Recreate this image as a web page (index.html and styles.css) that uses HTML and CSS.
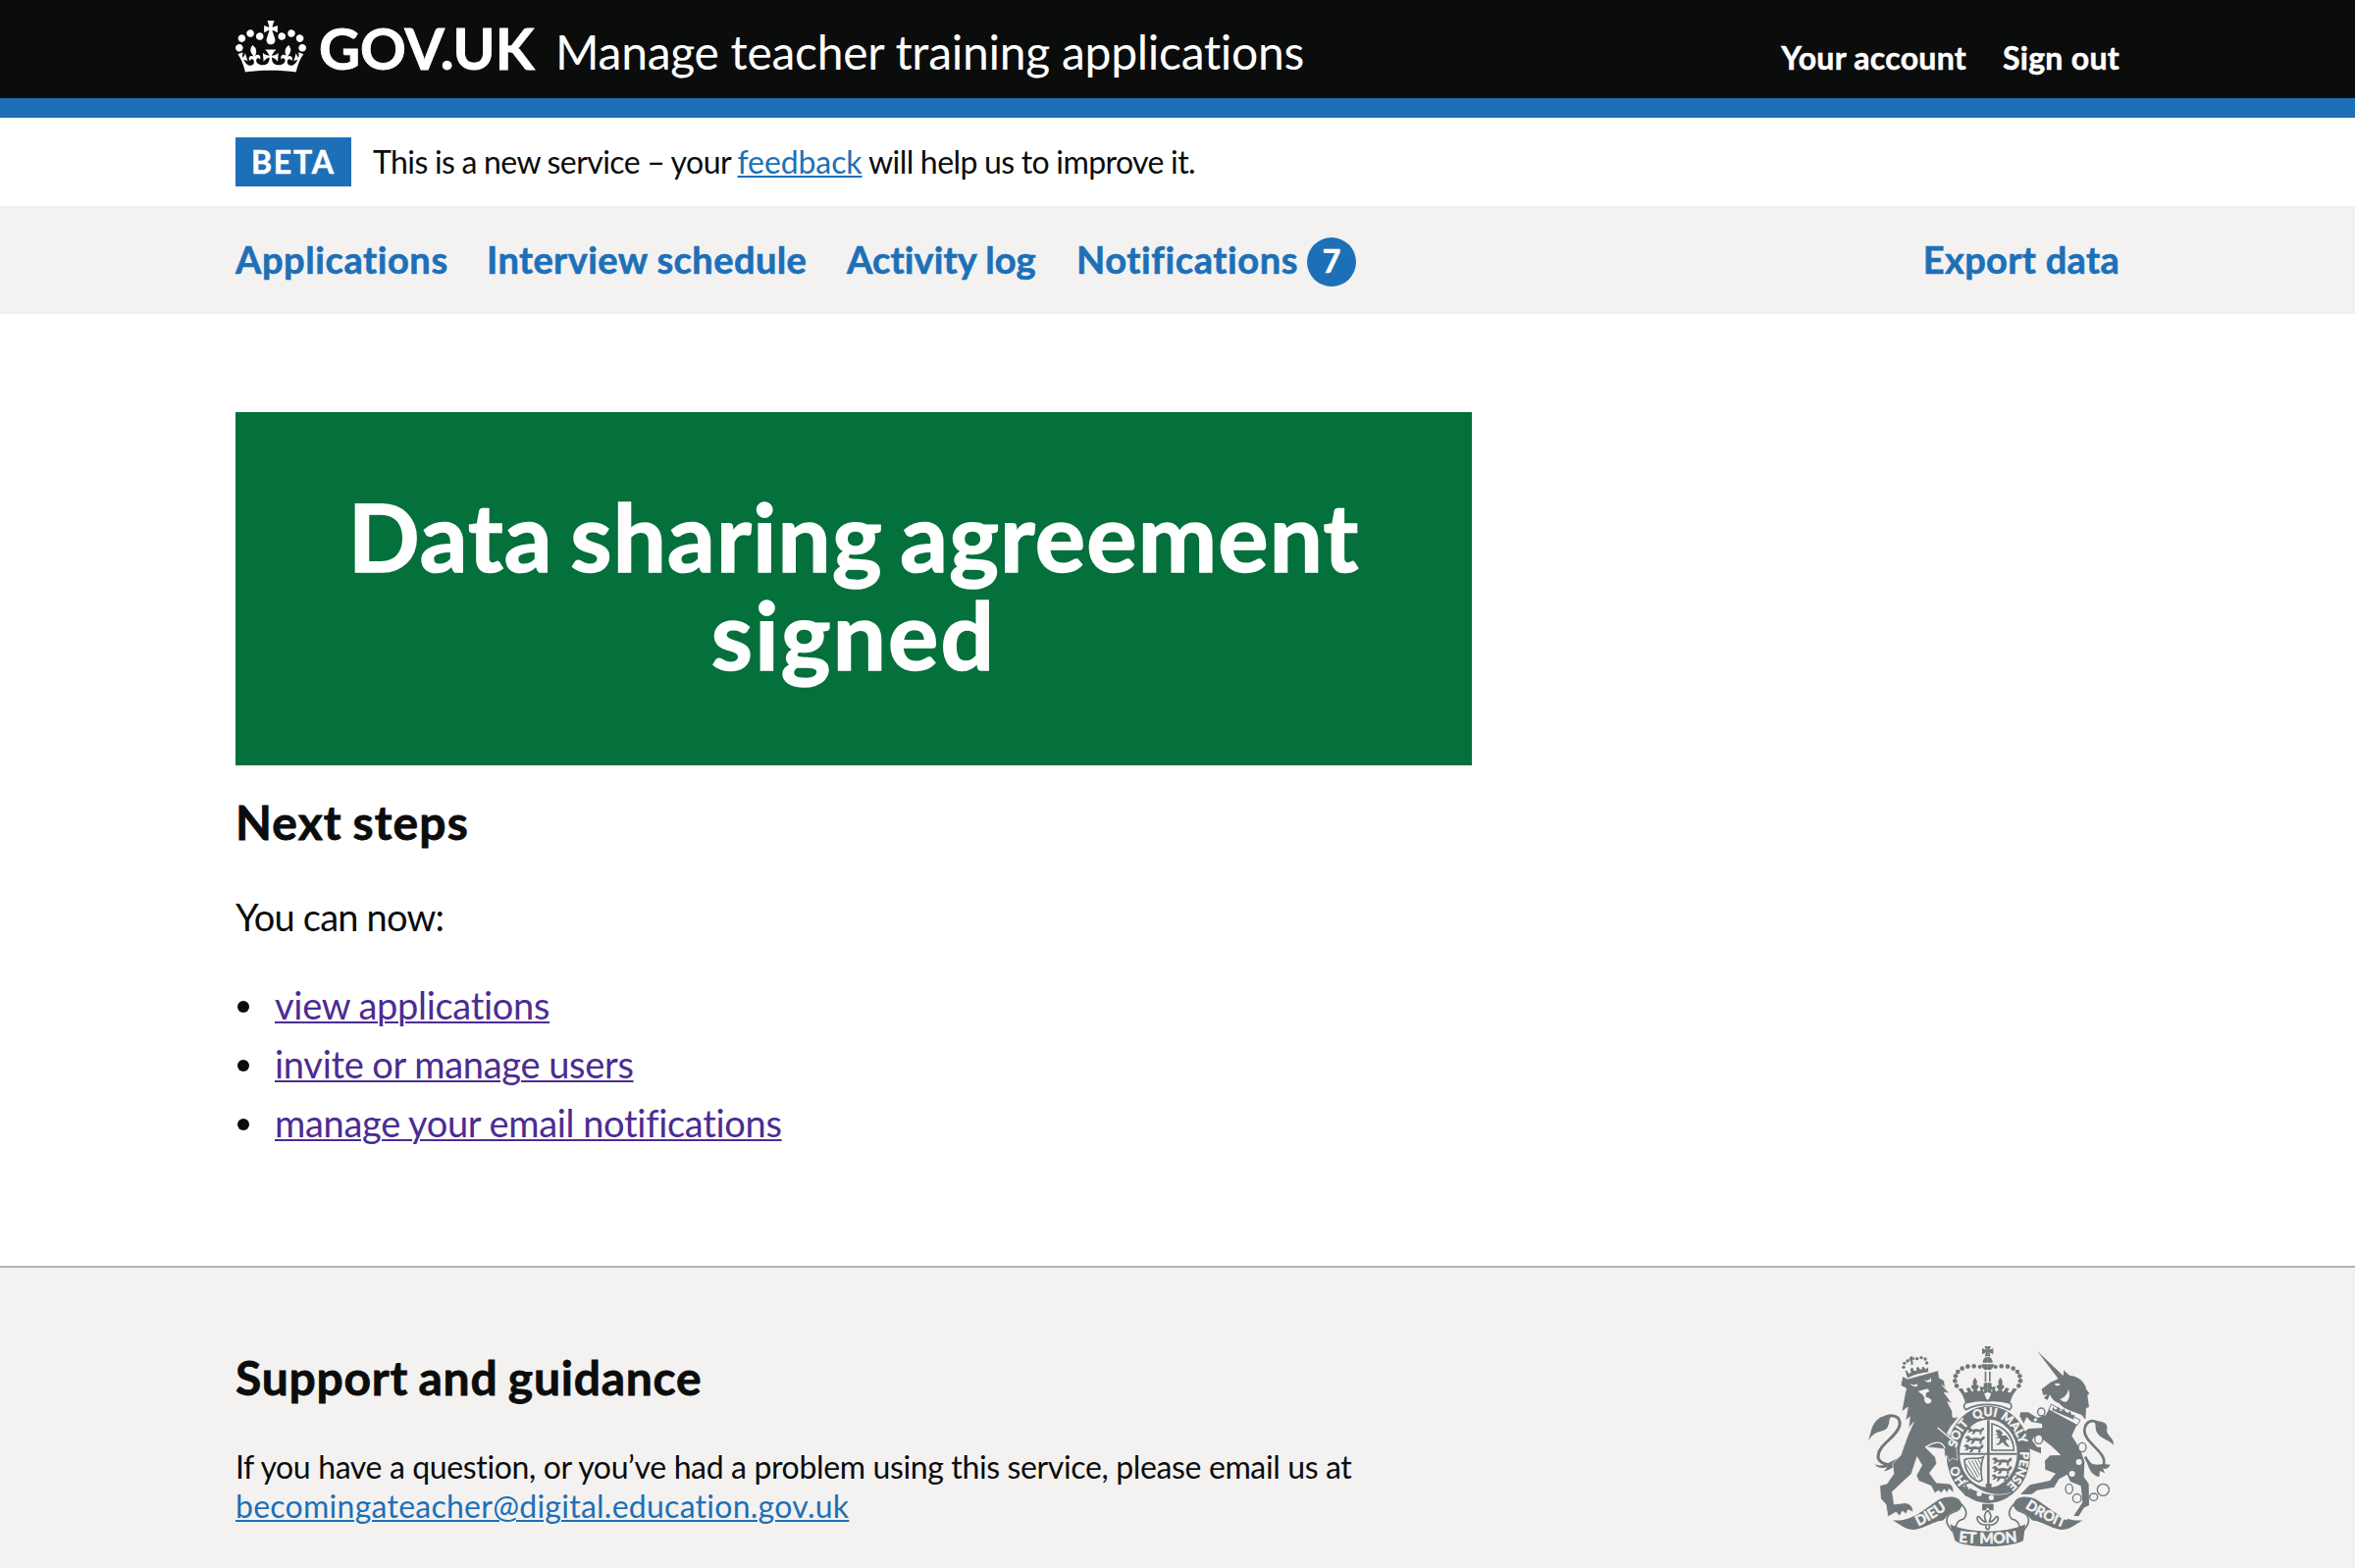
FILE: index.html
```
<!DOCTYPE html>
<html lang="en">
<head>
<meta charset="utf-8">
<title>Data sharing agreement signed - Manage teacher training applications - GOV.UK</title>
<link rel="stylesheet" href="styles.css">
</head>
<body>
<header class="header">
  <div class="container header-row">
    <svg class="crown" viewBox="0 0 132 97" aria-hidden="true"><path fill="currentColor" fill-rule="evenodd" d="M25 30.2c3.5 1.5 7.7-.2 9.1-3.7 1.5-3.6-.2-7.8-3.9-9.2-3.6-1.4-7.6.3-9.1 3.9-1.4 3.5.3 7.5 3.9 9zM9 39.5c3.6 1.5 7.8-.2 9.2-3.7 1.5-3.6-.2-7.8-3.9-9.1-3.6-1.5-7.6.2-9.1 3.8-1.4 3.5.3 7.5 3.8 9zM4.4 57.2c3.5 1.5 7.7-.2 9.1-3.8 1.5-3.6-.2-7.7-3.9-9.1-3.5-1.5-7.6.3-9.1 3.8-1.4 3.5.3 7.6 3.9 9.1zm38.3-21.4c3.5 1.5 7.7-.2 9.1-3.8 1.5-3.6-.2-7.7-3.9-9.1-3.6-1.5-7.6.3-9.1 3.8-1.3 3.6.4 7.7 3.9 9.1zm64.4-5.6c-3.6 1.5-7.8-.2-9.1-3.7-1.5-3.6.2-7.8 3.8-9.2 3.6-1.4 7.7.3 9.2 3.9 1.3 3.5-.4 7.5-3.9 9zm15.9 9.3c-3.6 1.5-7.7-.2-9.1-3.7-1.5-3.6.2-7.8 3.7-9.1 3.6-1.5 7.7.2 9.2 3.8 1.5 3.5-.3 7.5-3.8 9zm4.7 17.7c-3.6 1.5-7.8-.2-9.2-3.8-1.5-3.6.2-7.7 3.9-9.1 3.6-1.5 7.7.3 9.2 3.8 1.3 3.5-.4 7.6-3.9 9.1zM89.3 35.8c-3.6 1.5-7.8-.2-9.2-3.8-1.4-3.6.2-7.7 3.9-9.1 3.6-1.5 7.7.3 9.2 3.8 1.4 3.6-.3 7.7-3.9 9.1zM69.7 17.7l8.9 4.7V9.3l-8.9 2.8c-.2-.3-.5-.6-.9-.9L72.4 0H59.6l3.5 11.2c-.3.3-.6.5-.9.9l-8.8-2.8v13.1l8.8-4.7c.3.3.6.7.9.9l-5 15.4v.1c-.2.8-.4 1.6-.4 2.4 0 4.1 3.1 7.5 7 8.1h.2c.3 0 .7.1 1 .1.4 0 .7 0 1-.1h.2c4-.6 7.1-4.1 7.1-8.1 0-.8-.1-1.7-.4-2.4V34l-5.1-15.4c.4-.2.7-.6 1-.9zM66 92.8c16.9 0 32.8 1.1 47.1 3.2 4-16.9 8.9-26.7 14-33.5l-9.6-3.4c1 4.9 1.1 7.2 0 10.2-1.5-1.4-3-4.3-4.2-8.7L108.6 76c2.8-2 5-3.2 7.5-3.3-4.4 9.4-10 11.9-13.6 11.2-4.3-.8-6.3-4.6-5.6-7.9 1-4.7 5.7-5.9 8-.5 4.3-8.7-3-11.4-7.6-8.8 7.1-7.2 7.9-13.5 2.1-21.1-8 6.1-8.1 12.3-4.5 20.8-4.7-5.4-12.1-2.5-9.5 6.2 3.4-5.2 7.9-2 7.2 3.1-.6 4.3-6.4 7.8-13.5 7.2-10.3-.9-10.9-8-11.2-13.8 2.5-.5 7.1 1.8 11 7.3L80.2 60c-4.1 4.4-8 5.3-12.3 5.4 1.4-4.4 8-11.6 8-11.6H55.5s6.4 7.2 7.9 11.6c-4.2-.1-8-1-12.3-5.4l1.4 16.4c3.9-5.5 8.5-7.7 10.9-7.3-.3 5.8-.9 12.8-11.1 13.8-7.2.6-12.9-2.9-13.5-7.2-.7-5 3.8-8.3 7.1-3.1 2.7-8.7-4.6-11.6-9.4-6.2 3.7-8.5 3.6-14.7-4.6-20.8-5.8 7.6-5 13.9 2.2 21.1-4.7-2.6-11.9.1-7.7 8.8 2.3-5.5 7.1-4.2 8.1.5.7 3.3-1.3 7.1-5.7 7.9-3.5.7-9-1.8-13.5-11.2 2.5.1 4.7 1.3 7.5 3.3l-4.7-15.4c-1.2 4.4-2.7 7.2-4.3 8.7-1.1-3-.9-5.3 0-10.2l-9.5 3.4c5 6.9 9.9 16.7 14 33.5 14.8-2.1 30.8-3.2 47.7-3.2z"/></svg>
    <a class="logotype" href="#">GOV.UK</a>
    <a class="service-name" href="#">Manage teacher training applications</a>
    <nav class="account">
      <a class="account-link" href="#">Your account</a>
      <a class="account-link sign-out" href="#">Sign out</a>
    </nav>
  </div>
</header>
<div class="container phase">
  <strong class="tag">BETA</strong>
  <span class="phase-text">This is a new service – your <a class="link feedback" href="#">feedback</a> will help us to improve it.</span>
</div>
<nav class="primary">
  <div class="container primary-row">
    <a class="nav-link nav-applications" href="#">Applications</a>
    <a class="nav-link" href="#">Interview schedule</a>
    <a class="nav-link nav-activity" href="#">Activity log</a>
    <a class="nav-link nav-notifications" href="#">Notifications<span class="badge">7</span></a>
    <a class="nav-link nav-export" href="#">Export data</a>
  </div>
</nav>
<main class="container main">
  <div class="panel"><h1 class="panel-title">Data sharing agreement <span class="panel-last">signed</span></h1></div>
  <h2 class="heading next">Next steps</h2>
  <p class="body">You can now:</p>
  <ul class="list">
    <li class="item"><a class="link visited" href="#">view applications</a></li>
    <li class="item"><a class="link visited" href="#">invite or manage users</a></li>
    <li class="item"><a class="link visited" href="#">manage your email notifications</a></li>
  </ul>
</main>
<footer class="footer">
  <div class="container footer-row">
    <div class="support">
      <h2 class="heading support-title">Support and guidance</h2>
      <p class="support-text">If you have a question, or you’ve had a problem using this service, please email us at<br><a class="link email" href="#">becomingateacher@digital.education.gov.uk</a></p>
    </div>
    <svg class="arms" viewBox="72 66 750 612" role="img" aria-label="Royal coat of arms">
      <defs>
        <path id="garter" d="M439 510A98 115 0 0 1 439 280A98 115 0 0 1 439 510"/>
        <path id="dieu" d="M213 621Q268 598 322 556"/>
        <path id="mon" d="M345 664Q437 674 530 664"/>
        <path id="droit" d="M548 557Q604 596 672 622"/>
        <g id="leopard"><path d="M2 6l8-5 7 4 2 5 15-2 16 2 6-7 7 2-3 8-6 3-2 8 6 2-12 1 1-9-14-1-6 9-9 1 6-10-7-1-5 5-9-1 6-4-1-5-6-2z"/></g>
        <g id="half">
          <circle cx="413" cy="129" r="6"/><circle cx="395" cy="127" r="7"/><circle cx="376" cy="128" r="7"/><circle cx="359" cy="134" r="7"/><circle cx="346" cy="144" r="7"/><circle cx="339" cy="157" r="7"/><circle cx="337" cy="172" r="7"/><circle cx="342" cy="187" r="7"/>
          <path d="M437 236V206l-14 6 4-14-12 5-2-15 11 3 2-9h-3l5-4h9v38zM437 236c-26-5-48-4-68 4-6-21-12-33-23-43l13-3 8 14 10-2-6-10 10-4 9 14 4-6-7-8c-2-6 4-10 7-8-6-8 0-16 4-22 5 6 10 14 4 22 4-2 9 2 7 8l-6 8 7 4 11-6z"/>
          <path d="M437 66h-10l5 11-12-5v19l12-6-4 12h9zM437 99h-5c-9 5-10 11-10 17h15zM418 121h19v17h-9c-7-4-10-10-10-17zM428 143h5v32h-5z"/>
        </g>
      </defs>
      <g class="ink">
        <!-- crown above the shield -->
        <use href="#half"/><use href="#half" transform="matrix(-1 0 0 1 874 0)"/>
        <path class="outline" stroke-width="5" d="M371 239C408 229 466 229 503 239C513 243 511 255 504 260C466 239 408 239 370 260C362 253 363 243 371 239z"/>
        <!-- garter and shield -->
        <path class="outline" stroke-width="4" d="M345 283C326 297 316 312 308 334"/>
        <ellipse cx="439" cy="397" rx="128" ry="148"/>
        <ellipse class="paper" cx="439" cy="394" rx="88" ry="104"/>
        <path d="M435 292h8v206h-8zM351 392h176v6H351z"/>
        <use href="#leopard" transform="translate(372 312) scale(.87)"/><use href="#leopard" transform="translate(366 338)"/><use href="#leopard" transform="translate(362 364)"/>
        <use href="#leopard" transform="translate(449 404)"/><use href="#leopard" transform="translate(449 430)"/><use href="#leopard" transform="translate(448 456) scale(.85)"/>
        <path class="outline" stroke-width="5" d="M450 303V384H517C516 346 493 314 450 303z"/>
        <path d="M462 322l12 0 9 9-4 8 14 0 12 15-9-4-4 7 13 18-14-5-8-11-14 10-8-4 10-3 4-15-13 0 8-6-11-7 11 1-8-8z"/>
        <path class="outline" stroke-width="5" d="M366 413C384 404 404 414 424 404C414 430 416 455 420 475L410 480C384 471 367 446 366 413z"/>
        <path class="outline" stroke-width="3" d="M378 416L408 468M389 415L412 460M399 414L414 445M408 412L416 428M370 425L400 470"/>
        <!-- buckle -->
        <path class="paper" d="M362 494L374 475L392 490C430 520 474 524 508 512L498 524C456 530 410 522 380 504z"/>
        <path d="M383 500C420 519 468 528 510 514C480 546 425 562 369 518z"/>
        <path class="outline" stroke-width="6" d="M388 484C372 478 363 492 374 500C361 508 366 526 382 522"/>
        <path d="M431 486h18v18h-18z"/>
        <circle class="paper" cx="411" cy="517" r="8"/><circle class="paper" cx="448" cy="529" r="8"/>
        <!-- lion -->
        <path class="outline" stroke-width="9" d="M178 423C135 437 107 424 102 407C99 366 160 346 168 307C172 275 137 271 113 290"/>
        <path d="M72 356C82 322 83 298 111 282L143 278C131 290 142 316 117 324C96 329 83 335 72 356zM92 425C103 434 122 432 143 418L184 398L180 428C153 425 145 444 120 449L130 436C112 440 98 438 92 425z"/>
        <path class="edge" d="M171 186L177 158L192 166L286 140L289 163L304 171L307 193L297 184L320 210L303 207L327 239L314 236L328 263L330 283L346 286L324 312L313 332L340 362L345 414L328 408L320 418L312 400L306 404L304 380L246 374L277 405L281 425L259 454L280 483L314 486C325 485 333 496 333 514L319 502L313 514L304 503L295 515L287 507L275 515L264 493L226 478L219 461L236 430L221 404L204 456L145 511L151 549L184 545C199 546 209 557 209 572L193 566L188 579L176 570L168 585L157 573L132 587L126 550L110 532L107 492L129 486L150 456L146 425L171 400L193 338L211 298L195 317L199 282L186 293L193 252L174 266L183 218L188 195z"/>
        <path class="paper" d="M199 180q17 8 24-1l-2 10q-13 4-22-9zM243 169q14 6 21-7l0 12q-14 6-21-5zM224 204l28-8 8 7-12 6 0 12q18 3 17 14-6 10-16 5-8-7-5-16l-6-10z"/>
        <path class="cut" d="M284 315L340 362M248 374C270 360 296 350 306 378"/>
        <path d="M192 163L184 139L191 142L196 150L203 146L200 136L207 131L212 141L219 142L219 132L225 128L229 136L236 137L237 128L244 131L247 137L254 130L256 145Q222 148 192 163zM199 99l9-4-1 7 7-3-1 10-6-3 2 16-6 2-2-15-6 3z"/>
        <circle cx="180" cy="130" r="5"/><circle cx="182" cy="118" r="5"/><circle cx="192" cy="111" r="5"/><circle cx="221" cy="104" r="5"/><circle cx="234" cy="101" r="5"/><circle cx="246" cy="105" r="5"/><circle cx="251" cy="117" r="5"/>
        <!-- unicorn -->
        <path d="M588 80L670 158L653 166z"/>
        <path d="M652 166L669 154L669 139L687 155C715 157 736 177 739 199L748 210L742 216L747 252L738 255L736 290L724 276C700 265 672 262 655 240C638 235 631 222 627 214L620 230L609 225L619 212L607 216L602 197L628 177z"/>
        <path class="paper" d="M641 182q9-6 18 1-9 8-18-1zM658 228q22-8 26-31 8 22-5 38-8 5-21-7z"/>
        <path d="M628 251L711 303L694 340L720 381L733 420L731 466L746 487L747 552L731 560L715 586L700 584L727 544L722 493L690 480L680 458L655 472L640 497L588 506L572 518L537 519L566 490L627 477L645 455L613 443L612 416L628 400L661 399L632 371L603 349L578 344L573 354L588 374L600 375L600 394L564 379L545 331L562 318L604 316L603 303L570 297L556 282L547 302L535 280L537 268L561 268L589 285L615 276z"/>
        <path class="paper" d="M631 240L722 291L711 306L624 260z"/>
        <path class="outline" stroke-width="3" d="M631 243L720 292L710 308L624 261z"/>
        <path d="M634 262l3-11 6 9 5-1 4-9 6 14 7 0 5-8 6 14 7 0 5-7 6 14 8-2-2 15z"/>
        <g class="outline" stroke-width="4"><ellipse class="ring" cx="601" cy="267" rx="11" ry="12"/><ellipse class="ring" cx="593" cy="350" rx="12" ry="14"/><ellipse class="ring" cx="726" cy="375" rx="12" ry="14"/><ellipse class="ring" cx="686" cy="502" rx="11" ry="15"/><ellipse class="ring" cx="710" cy="531" rx="13" ry="13"/><ellipse class="ring" cx="761" cy="527" rx="12" ry="11"/><circle class="ring" cx="790" cy="505" r="18"/></g>
        <circle class="paper" cx="716" cy="420" r="9"/><circle class="paper" cx="695" cy="456" r="9"/><circle class="paper" cx="583" cy="291" r="5"/>
        <path class="outline" stroke-width="8" d="M735 404C750 437 780 445 791 430C806 390 729 362 733 321C737 293 759 288 777 303"/>
        <path d="M761 294C796 294 807 305 801 324C805 345 822 343 822 368C807 350 783 350 773 332C763 320 771 306 761 294zM738 412C750 430 769 430 790 426L812 428C805 440 798 443 789 439L795 454L780 447L778 466C754 459 746 443 738 412z"/>
        <!-- motto ribbon -->
        <path d="M146 598C211 604 247 558 291 533C322 521 354 526 357 549C358 565 338 566 320 577C308 586 307 602 289 600C260 608 237 626 207 627C185 626 171 612 146 598z"/>
        <path d="M728 598C663 604 627 558 583 533C552 521 520 526 517 549C516 565 536 566 554 577C566 586 567 602 585 600C614 608 637 626 667 627C689 626 703 612 728 598z"/>
        <path class="fold" d="M357 549C376 569 373 584 364 594C350 597 342 605 340 616L327 629C316 615 305 601 317 582C334 568 350 575 357 549zM517 549C498 569 501 584 510 594C524 597 532 605 534 616L547 629C558 615 569 601 557 582C540 568 524 575 517 549z"/>
        <path d="M322 610C380 640 500 638 552 610L546 660C510 684 365 684 337 660z"/>
        <path d="M420 548h35v20h-12l-6-9-6 9h-11z"/>
        <path class="outline" stroke-width="5" d="M437 568C420 582 430 593 432 603C417 605 411 577 405 590C404 604 416 613 430 612M437 568C454 582 444 593 442 603C457 605 463 577 469 590C470 604 458 613 444 612M425 612H449M432 615C430 623 435 626 437 626C439 626 444 623 442 615"/>
      </g>
      <g class="motto">
        <text class="garter-text"><textPath href="#garter" startOffset="15.5%">HO</textPath></text>
        <text class="garter-text"><textPath href="#garter" startOffset="34%">SOIT</textPath></text>
        <text class="garter-text"><textPath href="#garter" startOffset="48.5%">QUI</textPath></text>
        <text class="garter-text"><textPath href="#garter" startOffset="63%">MALY</textPath></text>
        <text class="garter-text"><textPath href="#garter" startOffset="82.5%">PENSE</textPath></text>
        <text class="ribbon-text"><textPath href="#dieu" startOffset="50%">DIEU</textPath></text>
        <text class="ribbon-text mon-text"><textPath href="#mon" startOffset="50%">ET MON</textPath></text>
        <text class="ribbon-text"><textPath href="#droit" startOffset="50%">DROIT</textPath></text>
      </g>
    </svg>
  </div>
</footer>
</body>
</html>
```
FILE: styles.css
```
*{box-sizing:border-box}
body{margin:0;min-height:1598px;display:flex;flex-direction:column;background:#fff;color:#0b0c0c;font-family:Lato,"Liberation Sans",sans-serif;font-size:32px;line-height:40px;overflow:hidden;font-kerning:normal}
a{text-decoration:none;color:inherit}
h1,h2,p,ul{margin:0;padding:0}
.container{width:1920px;margin:0 auto}
.header{height:120px;background:#0b0c0c;border-bottom:20px solid #1d70b8;color:#fff}
.header-row{display:flex;align-items:baseline;padding-top:19px}
.crown{width:72px;height:53px;align-self:flex-start;margin-top:2px}
.logotype,.account,.tag,.nav-link,.panel-title,.heading{-webkit-text-stroke:.016em currentColor}
.logotype{margin-left:13px;width:220px;font-size:58px;line-height:60px;font-weight:700}
.service-name{margin-left:21px;font-size:48px;line-height:50px;letter-spacing:-.28px}
.account{margin-left:auto;display:flex;font-weight:700}
.account-link{letter-spacing:.28px}
.sign-out{margin-left:37px;letter-spacing:.3px}
.phase{height:90px;padding-top:20px;display:flex;align-items:flex-start}
.tag{width:118px;height:50px;padding:5px 0 5px 16px;background:#1d70b8;color:#fff;font-weight:700;letter-spacing:1.8px}
.phase-text{margin:5px 0 0 22px;letter-spacing:-.58px;word-spacing:-.4px}
.link{color:#1d70b8;text-decoration:underline;text-decoration-thickness:2px;text-underline-offset:2px}
.feedback{letter-spacing:-.1px}
.visited{color:#4c2c92}
.primary{height:110px;padding-top:29px;background:#f3f2f1}
.primary-row{display:grid;grid-template-columns:256px 367px 234px 285px 1fr;align-items:start}
.nav-link{color:#1d70b8;font-size:38px;line-height:50px;font-weight:700;letter-spacing:.42px}
.nav-applications{letter-spacing:.58px}
.nav-activity{letter-spacing:.12px}
.nav-notifications{display:flex;justify-content:space-between;letter-spacing:.6px}
.nav-export{justify-self:end;letter-spacing:.32px}
.badge{width:50px;height:50px;margin-top:3px;border-radius:50%;background:#1d70b8;color:#fff;font-size:32px;line-height:48px;text-align:center;letter-spacing:0}
.main{padding-top:100px}
.panel{width:1260px;height:360px;padding:76px 70px 0;background:#04703c;color:#fff;text-align:center}
.panel-title{font-size:96px;line-height:100px;font-weight:700;letter-spacing:1.2px;word-spacing:-7px}
.panel-last{display:block;letter-spacing:2.2px}
.heading{font-size:48px;line-height:50px;font-weight:700}
.next{margin-top:33px;letter-spacing:1.1px;word-spacing:-2px}
.body{margin-top:46px;font-size:38px;line-height:50px;letter-spacing:-.8px}
.list{margin-top:40px;display:grid;gap:10px;list-style:none;font-size:38px;line-height:50px;letter-spacing:-.3px;word-spacing:-.5px}
.item{display:flex;align-items:center;padding-left:2px}
.item::before{content:"";width:12px;height:12px;margin:4px 26px 0 0;border-radius:50%;background:#0b0c0c}
.footer{flex:1;margin-top:121px;border-top:2px solid #b1b4b6;background:#f3f2f1}
.footer-row{display:flex;justify-content:space-between;align-items:flex-start;padding-top:80px}
.support-title{margin-top:7px;letter-spacing:.75px;word-spacing:-2px}
.support-text{margin-top:46px;letter-spacing:-.365px}
.email{letter-spacing:.26px}
.arms{width:250px;height:204px;margin-right:6px}
.ink{fill:#6f777b}
.outline{fill:none;stroke:#6f777b}
.ring{fill:#f3f2f1}
.paper{fill:#f3f2f1}
.edge{stroke:#f3f2f1;stroke-width:2}
.cut{fill:none;stroke:#f3f2f1;stroke-width:4}
.fold{fill:#f3f2f1;stroke:#6f777b;stroke-width:5}
.motto{fill:#f3f2f1;stroke:#f3f2f1;stroke-width:1.6;font-weight:700;text-anchor:middle}
.garter-text{font-size:37px}
.ribbon-text{font-size:43px}
.mon-text{font-size:46px}
```
